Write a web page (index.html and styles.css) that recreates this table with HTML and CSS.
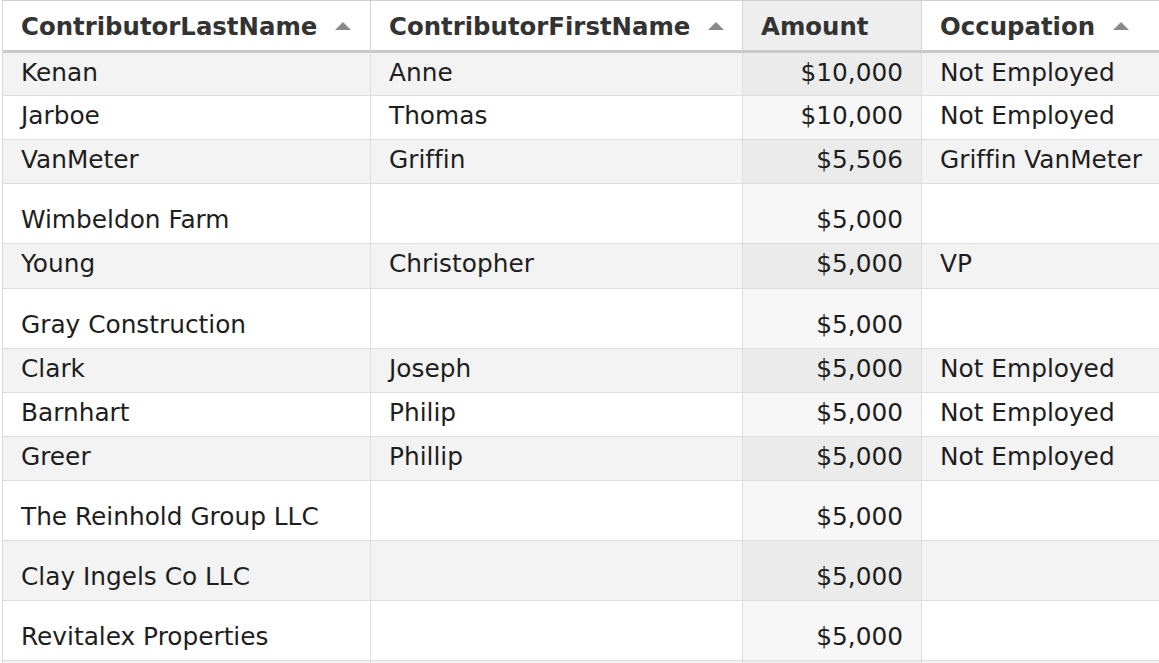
FILE: index.html
```html
<!DOCTYPE html>
<html lang="en">
<head>
<meta charset="utf-8">
<title>Contributions</title>
<link rel="stylesheet" href="styles.css">
</head>
<body>
<div class="table">
  <div class="row head">
    <div class="cell">ContributorLastName<svg class="sort" width="16" height="8" viewBox="0 0 16 8"><polygon points="8,0 16,8 0,8"/></svg></div>
    <div class="cell">ContributorFirstName<svg class="sort" width="16" height="8" viewBox="0 0 16 8"><polygon points="8,0 16,8 0,8"/></svg></div>
    <div class="cell amt">Amount</div>
    <div class="cell">Occupation<svg class="sort" width="16" height="8" viewBox="0 0 16 8"><polygon points="8,0 16,8 0,8"/></svg></div>
  </div>
  <div class="row odd first">
    <div class="cell">Kenan</div><div class="cell">Anne</div><div class="cell amt">$10,000</div><div class="cell">Not Employed</div>
  </div>
  <div class="row even">
    <div class="cell">Jarboe</div><div class="cell">Thomas</div><div class="cell amt">$10,000</div><div class="cell">Not Employed</div>
  </div>
  <div class="row odd">
    <div class="cell">VanMeter</div><div class="cell">Griffin</div><div class="cell amt">$5,506</div><div class="cell">Griffin VanMeter</div>
  </div>
  <div class="row even tall">
    <div class="cell">Wimbeldon Farm</div><div class="cell"></div><div class="cell amt">$5,000</div><div class="cell"></div>
  </div>
  <div class="row odd roomy">
    <div class="cell">Young</div><div class="cell">Christopher</div><div class="cell amt">$5,000</div><div class="cell">VP</div>
  </div>
  <div class="row even tall">
    <div class="cell">Gray Construction</div><div class="cell"></div><div class="cell amt">$5,000</div><div class="cell"></div>
  </div>
  <div class="row odd">
    <div class="cell">Clark</div><div class="cell">Joseph</div><div class="cell amt">$5,000</div><div class="cell">Not Employed</div>
  </div>
  <div class="row even">
    <div class="cell">Barnhart</div><div class="cell">Philip</div><div class="cell amt">$5,000</div><div class="cell">Not Employed</div>
  </div>
  <div class="row odd">
    <div class="cell">Greer</div><div class="cell">Phillip</div><div class="cell amt">$5,000</div><div class="cell">Not Employed</div>
  </div>
  <div class="row even tall">
    <div class="cell">The Reinhold Group LLC</div><div class="cell"></div><div class="cell amt">$5,000</div><div class="cell"></div>
  </div>
  <div class="row odd tall">
    <div class="cell">Clay Ingels Co LLC</div><div class="cell"></div><div class="cell amt">$5,000</div><div class="cell"></div>
  </div>
  <div class="row even tall">
    <div class="cell">Revitalex Properties</div><div class="cell"></div><div class="cell amt">$5,000</div><div class="cell"></div>
  </div>
  <div class="row odd">
    <div class="cell"></div><div class="cell"></div><div class="cell amt"></div><div class="cell"></div>
  </div>
</div>
</body>
</html>
```

FILE: styles.css
```css
html, body {
  margin: 0;
  padding: 0;
  overflow: hidden;
  background: #ffffff;
}

body {
  font-family: "DejaVu Sans", Verdana, sans-serif;
  font-size: 24.8px;
  font-variant-ligatures: none;
  color: #1e1e1e;
}

.table {
  margin-left: 2px;
  width: 1170px;
  border-left: 1px solid #d8d8d8;
  border-top: 1px solid #d0d0d0;
}

.row {
  display: grid;
  grid-template-columns: 368px 372px 179px 251px;
}

.cell {
  box-sizing: border-box;
  height: 44px;
  padding: 6px 18px 0 18px;
  line-height: 27px;
  white-space: nowrap;
  border-right: 1px solid #dddddd;
  border-bottom: 1px solid #dddddd;
}

.row.first .cell {
  height: 43px;
}

.row.roomy .cell {
  height: 45px;
}

.row.tall .cell {
  height: 60px;
  padding-top: 22px;
}

.row.odd {
  background: #f3f3f3;
}

.row.even {
  background: #ffffff;
}

.row.odd .amt {
  background: #ebebeb;
}

.row.even .amt {
  background: #f7f7f7;
}

.cell.amt {
  text-align: right;
}

.head {
  background: #ffffff;
}

.head .cell {
  height: 52px;
  padding-top: 12px;
  font-size: 24.4px;
  font-weight: bold;
  color: #333333;
  border-right: 1px solid #d3d3d3;
  border-bottom: 3px solid #c9c9c9;
}

.head .cell.amt {
  background: #eeeeee;
  text-align: left;
}

.sort {
  display: inline-block;
  margin-left: 18px;
  vertical-align: 5px;
  fill: #8a8a8a;
}
```
